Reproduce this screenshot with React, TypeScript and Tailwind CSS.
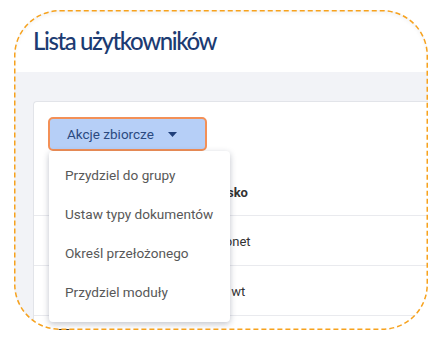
import { useState } from 'react';

const MENU_ITEMS = ['Przydziel do grupy', 'Ustaw typy dokumentów', 'Określ przełożonego', 'Przydziel moduły'];

const ROWS = [
  { name: 'Jan Kowalski', role: 'Portale onet' },
  { name: 'Anna Nowak', role: 'Obsługa wt' },
  { name: '', role: '' },
];

function Caret() {
  return (
    <svg width="9" height="5" viewBox="0 0 9 5" className="block">
      <path d="M0 0h9L4.5 5z" fill="#1f3f7a" />
    </svg>
  );
}

export default function App() {
  const [open] = useState(true);

  return (
    <div className="min-h-[339px] bg-white pl-[14px] pt-[10px]" style={{ fontFamily: 'Roboto, "Noto Sans", sans-serif' }}>
      <div className="relative h-[320px] w-[414px]">
        {/* clipped page content */}
        <div className="flex h-full w-full flex-col overflow-hidden rounded-[46px] bg-white shadow-[inset_0_3px_4px_rgba(0,0,0,0.05)]">
          <div className="flex h-[62px] shrink-0 items-start pl-[19px] pt-[17px]">
            <h1
              className="text-[24px] font-medium leading-[28px] text-[#1c3b72] tracking-[-1.4px]"
              style={{ fontFamily: 'Lato, "Noto Sans", sans-serif' }}
            >
              Lista użytkowników
            </h1>
          </div>

          <div className="flex-1 bg-[#f2f3f7] pl-[19px] pt-[29px]">
            <div className="relative h-full w-[420px] rounded-tl-[4px] border-l border-t border-[#e2e4e9] bg-white">
              <div className="pl-[14px] pt-[15px]">
                <button className="flex h-[34px] w-[159px] items-center rounded-[5px] border-2 border-[#f39057] bg-[#b6cff7] pl-[17px] text-[13.5px] text-[#2b4a80]">
                  <span>Akcje zbiorcze</span>
                  <span className="ml-[14px]">
                    <Caret />
                  </span>
                </button>
              </div>

              <div className="mt-[20px]">
                <div className="flex h-[45px] items-center border-b border-[#e9eaee] text-[13px] font-bold text-[#333]">
                  <div className="w-[36px]" />
                  <div className="w-[110px]">Imię i nazwisko</div>
                  <div>Stanowisko</div>
                </div>
                {ROWS.map((r, i) => (
                  <div key={i} className="flex h-[50px] items-start border-b border-[#e9eaee] text-[13px] text-[#333]">
                    <div className="flex w-[36px] justify-end pt-[13px]">
                      <span className="h-[12px] w-[12px] rounded-[2px] border-2 border-[#333]" />
                    </div>
                    <div className="w-[110px] pt-[16px]">{r.name}</div>
                    <div className="pt-[16px]">{r.role}</div>
                  </div>
                ))}
              </div>

              {open && (
                <div className="absolute left-[15px] top-[49px] w-[181px] rounded-[4px] bg-white pb-[10px] pt-[5px] shadow-[0_2px_6px_rgba(30,40,70,0.28)]">
                  {MENU_ITEMS.map((item) => (
                    <div key={item} className="flex h-[39px] items-center pl-[16px] text-[13.6px] text-[#585858]">
                      {item}
                    </div>
                  ))}
                </div>
              )}
            </div>
          </div>
        </div>

        {/* dashed highlight outline */}
        <svg className="pointer-events-none absolute inset-0" width="414" height="320" viewBox="0 0 414 320">
          <rect x="0.75" y="0.75" width="412.5" height="318.5" rx="45" fill="none" stroke="#f7a21d" strokeWidth="1.5" strokeDasharray="5 3" />
        </svg>
      </div>
    </div>
  );
}
